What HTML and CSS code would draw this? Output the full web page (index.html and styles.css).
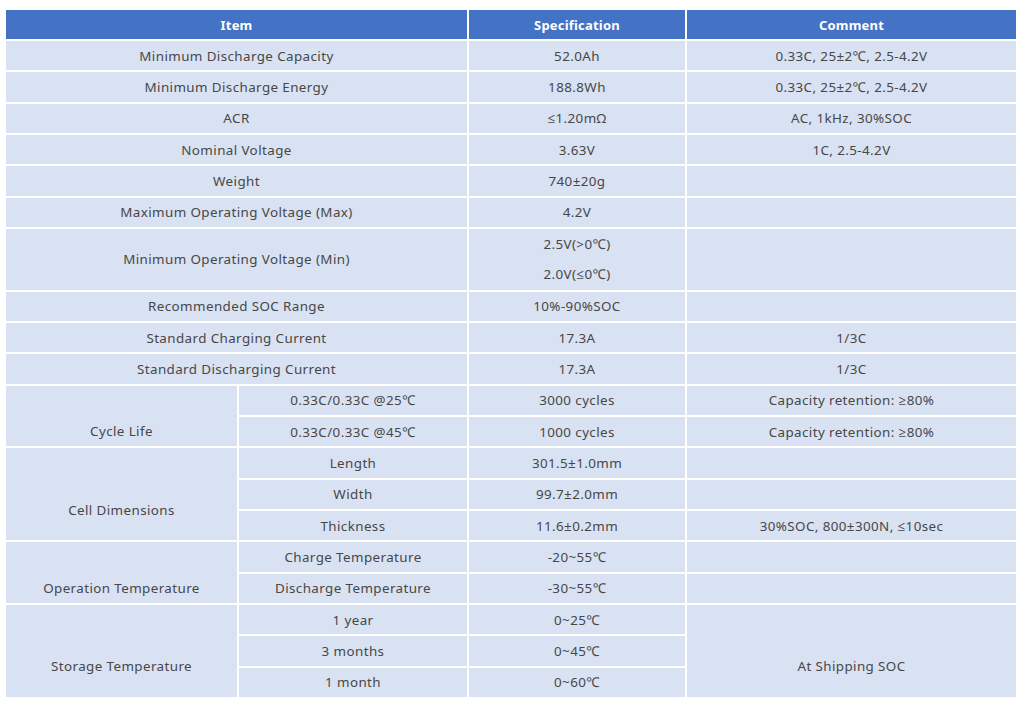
FILE: index.html
```html
<!DOCTYPE html>
<html>
<head>
<meta charset="utf-8">
<link rel="stylesheet" href="styles.css">
</head>
<body>
<table class="spec">
  <colgroup>
    <col class="c1"><col class="c2"><col class="c3"><col class="c4">
  </colgroup>
  <thead>
    <tr class="head"><th colspan="2">Item</th><th>Specification</th><th>Comment</th></tr>
  </thead>
  <tbody>
    <tr><td colspan="2">Minimum Discharge Capacity</td><td>52.0Ah</td><td>0.33C, 25±2℃, 2.5-4.2V</td></tr>
    <tr><td colspan="2">Minimum Discharge Energy</td><td>188.8Wh</td><td>0.33C, 25±2℃, 2.5-4.2V</td></tr>
    <tr><td colspan="2">ACR</td><td>≤1.20mΩ</td><td>AC, 1kHz, 30%SOC</td></tr>
    <tr><td colspan="2">Nominal Voltage</td><td>3.63V</td><td>1C, 2.5-4.2V</td></tr>
    <tr><td colspan="2">Weight</td><td>740±20g</td><td></td></tr>
    <tr><td colspan="2">Maximum Operating Voltage (Max)</td><td>4.2V</td><td></td></tr>
    <tr class="tall"><td colspan="2">Minimum Operating Voltage (Min)</td><td><div class="line">2.5V(&gt;0℃)</div><div class="line">2.0V(≤0℃)</div></td><td></td></tr>
    <tr><td colspan="2">Recommended SOC Range</td><td>10%-90%SOC</td><td></td></tr>
    <tr><td colspan="2">Standard Charging Current</td><td>17.3A</td><td>1/3C</td></tr>
    <tr><td colspan="2">Standard Discharging Current</td><td>17.3A</td><td>1/3C</td></tr>
    <tr><td rowspan="2" class="group">Cycle Life</td><td>0.33C/0.33C @25℃</td><td>3000 cycles</td><td>Capacity retention: ≥80%</td></tr>
    <tr><td>0.33C/0.33C @45℃</td><td>1000 cycles</td><td>Capacity retention: ≥80%</td></tr>
    <tr><td rowspan="3" class="group">Cell Dimensions</td><td>Length</td><td>301.5±1.0mm</td><td></td></tr>
    <tr><td>Width</td><td>99.7±2.0mm</td><td></td></tr>
    <tr><td>Thickness</td><td>11.6±0.2mm</td><td>30%SOC, 800±300N, ≤10sec</td></tr>
    <tr><td rowspan="2" class="group">Operation Temperature</td><td>Charge Temperature</td><td>-20~55℃</td><td></td></tr>
    <tr><td>Discharge Temperature</td><td>-30~55℃</td><td></td></tr>
    <tr><td rowspan="3" class="group">Storage Temperature</td><td>1 year</td><td>0~25℃</td><td rowspan="3" class="group">At Shipping SOC</td></tr>
    <tr><td>3 months</td><td>0~45℃</td></tr>
    <tr><td>1 month</td><td>0~60℃</td></tr>
  </tbody>
</table>
</body>
</html>
```

FILE: styles.css
```css
html, body {
  margin: 0;
  padding: 0;
  background: #ffffff;
}
body {
  padding: 8px 0 0 4px;
  font-family: "Noto Sans", "Open Sans", sans-serif;
}
.spec {
  width: 1012px;
  table-layout: fixed;
  border-collapse: collapse;
}
.c1 { width: 233px; }
.c2 { width: 230px; }
.c3 { width: 218px; }
.c4 { width: 331px; }
.spec th, .spec td {
  border: 2px solid #ffffff;
  text-align: center;
  vertical-align: middle;
  padding: 0;
  font-size: 13.4px;
  letter-spacing: 0.4px;
}
.spec th {
  background: #4472c4;
  color: #ffffff;
  font-weight: 700;
  font-size: 13px;
  letter-spacing: 0.2px;
  height: 29px;
}
.spec td {
  background: #d9e2f3;
  color: #474747;
}
.spec td.group {
  padding-top: 31px;
}
.spec tbody tr {
  height: 31.33px;
}
.spec tbody tr.tall {
  height: 62.66px;
}
.line {
  line-height: 30px;
}
```
